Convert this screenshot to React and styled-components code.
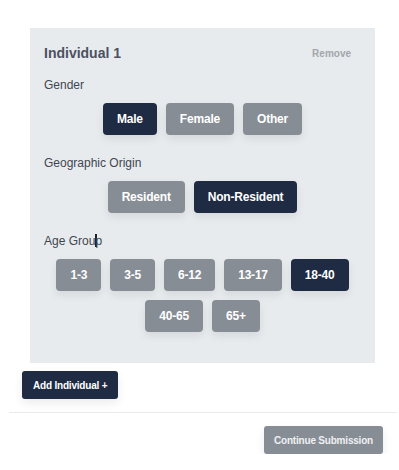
import React, { useState } from 'react'
import styled, { createGlobalStyle } from 'styled-components'

const GlobalStyle = createGlobalStyle`
  body {
    margin: 0;
    background: #fff;
    font-family: "Liberation Sans", Arial, sans-serif;
  }
`

const Page = styled.div`
  width: 399px;
  padding-top: 28px;
`

const Panel = styled.section`
  margin: 0 24px 0 30px;
  padding: 15px 14px 31px;
  background: #e8ebee;
`

const Header = styled.div`
  display: flex;
  align-items: center;
  justify-content: space-between;
  margin-bottom: 14px;
`

const Title = styled.h3`
  margin: 0;
  font-size: 14px;
  line-height: 20px;
  font-weight: 700;
  color: #4b5160;
`

const RemoveButton = styled.button`
  border: 0;
  background: none;
  padding: 0 10px 0 0;
  font-family: inherit;
  font-size: 10px;
  font-weight: 600;
  color: #a2a6ab;
  cursor: pointer;
`

const Field = styled.div`
  display: flex;
  flex-direction: column;
  gap: 10px;
  & + & {
    margin-top: 20px;
  }
`

const Label = styled.div`
  font-size: 12px;
  line-height: 16px;
  color: #3f4650;
`

const Caret = styled.span`
  display: inline-block;
  width: 1.5px;
  height: 13px;
  margin-right: -1.5px;
  vertical-align: -2px;
  background: #222;
`

const Options = styled.div`
  display: flex;
  flex-wrap: wrap;
  justify-content: center;
  gap: 9px 9px;
  padding: 0 10px;
`

const Option = styled.button`
  height: 32px;
  padding: 0 14px;
  border: 0;
  border-radius: 4px;
  background: ${p => (p.$active ? '#1e2b43' : '#878d95')};
  color: #fff;
  font-family: inherit;
  font-size: 12px;
  font-weight: 700;
  letter-spacing: -0.2px;
  box-shadow: 0 4px 8px rgba(0, 0, 0, 0.08);
  cursor: pointer;
`

const AddButton = styled.button`
  display: block;
  margin: 8px 0 0 22px;
  height: 28px;
  padding: 0 11px;
  border: 0;
  border-radius: 3px;
  background: #1e2b43;
  color: #fff;
  font-family: inherit;
  font-size: 10px;
  font-weight: 700;
  letter-spacing: -0.2px;
  box-shadow: 0 4px 10px rgba(0, 0, 0, 0.08);
`

const Divider = styled.hr`
  margin: 13px 2px 0 9px;
  border: 0;
  height: 1px;
  background: #e8eaed;
`

const Footer = styled.div`
  display: flex;
  justify-content: flex-end;
  padding: 13px 16px 0 0;
`

const ContinueButton = styled.button`
  height: 28px;
  padding: 0 10px;
  border: 0;
  border-radius: 3px;
  background: #878d95;
  color: #eef0f2;
  font-family: inherit;
  font-size: 10px;
  font-weight: 700;
  letter-spacing: -0.2px;
  box-shadow: 0 4px 10px rgba(0, 0, 0, 0.08);
`

const fields = [
  { key: 'gender', label: 'Gender', options: ['Male', 'Female', 'Other'] },
  { key: 'origin', label: 'Geographic Origin', options: ['Resident', 'Non-Resident'] },
  {
    key: 'age',
    label: 'Age Group',
    options: ['1-3', '3-5', '6-12', '13-17', '18-40', '40-65', '65+'],
  },
]

export default function App() {
  const [values, setValues] = useState({ gender: 'Male', origin: 'Non-Resident', age: '18-40' })

  return (
    <Page>
      <GlobalStyle />
      <Panel>
        <Header>
          <Title>Individual 1</Title>
          <RemoveButton>Remove</RemoveButton>
        </Header>
        {fields.map(f => (
          <Field key={f.key}>
            <Label>
              {f.key === 'age' ? (
                <>
                  Age Grou<Caret />p
                </>
              ) : (
                f.label
              )}
            </Label>
            <Options>
              {f.options.map(o => (
                <Option
                  key={o}
                  $active={values[f.key] === o}
                  onClick={() => setValues({ ...values, [f.key]: o })}
                >
                  {o}
                </Option>
              ))}
            </Options>
          </Field>
        ))}
      </Panel>
      <AddButton>Add Individual +</AddButton>
      <Divider />
      <Footer>
        <ContinueButton>Continue Submission</ContinueButton>
      </Footer>
    </Page>
  )
}
